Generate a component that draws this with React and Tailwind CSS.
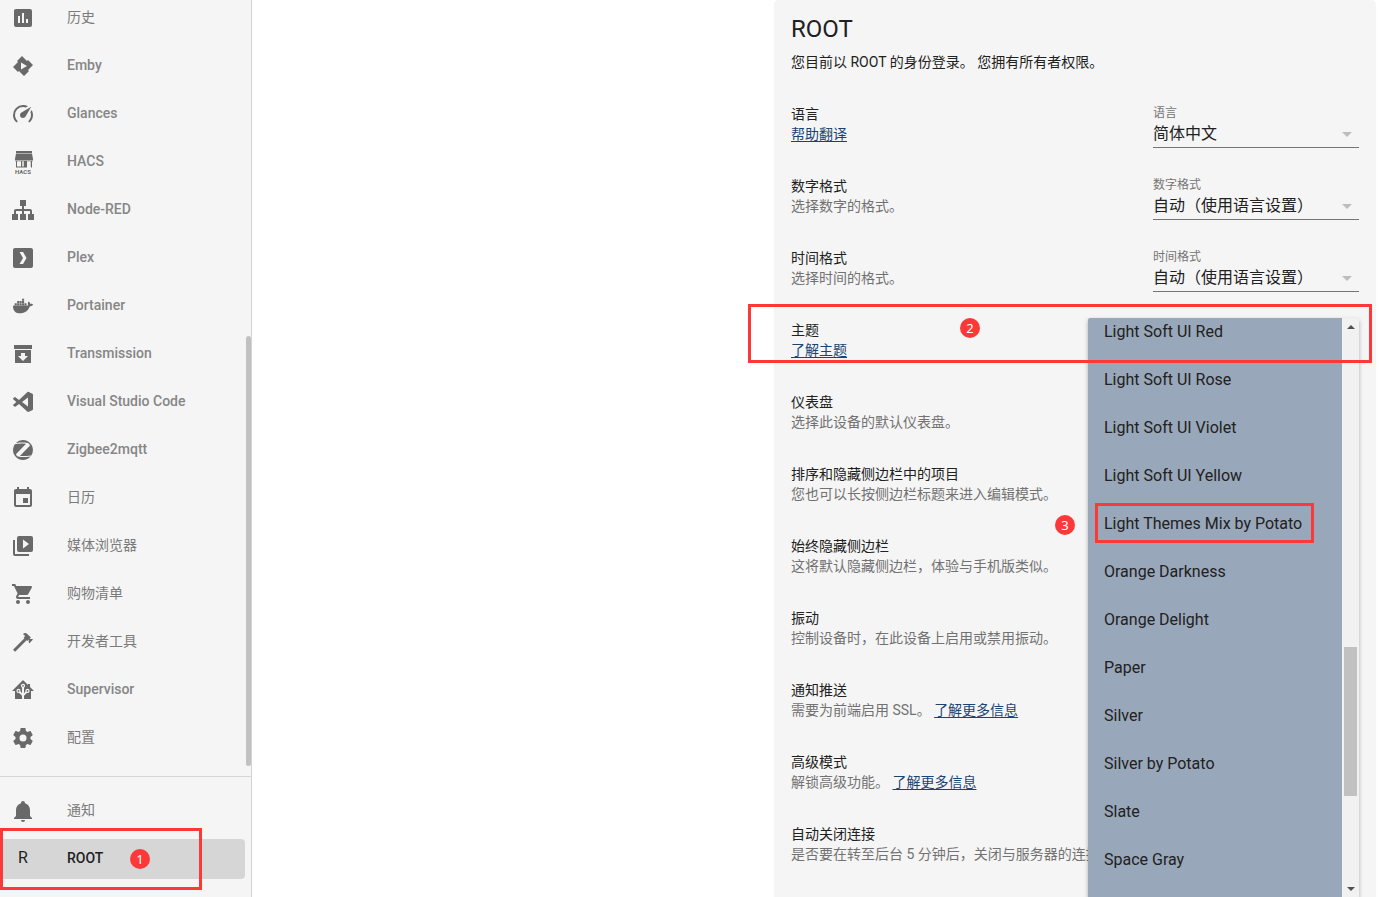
import React from "react";
import { SiZigbee } from "react-icons/si";

const PATHS = {
  history:
    "M9 17H7V10H9V17M13 17H11V7H13V17M17 17H15V13H17V17M19 3H5C3.89 3 3 3.89 3 5V19A2 2 0 0 0 5 21H19A2 2 0 0 0 21 19V5A2 2 0 0 0 19 3Z",
  emby: "M11,2L6,7L7,8L2,13L7,18L8,17L13,22L18,17L17,16L22,11L17,6L16,7L11,2M10,8.5L16,12L10,15.5V8.5Z",
  speedometer:
    "M12,16A3,3 0 0,1 9,13C9,11.88 9.61,10.9 10.5,10.39L20.21,4.77L14.68,14.35C14.18,15.33 13.17,16 12,16M12,3C13.81,3 15.5,3.5 16.97,4.32L14.87,5.53C14,5.19 13,5 12,5A8,8 0 0,0 4,13C4,15.21 4.89,17.21 6.34,18.65H6.35C6.74,19.04 6.74,19.67 6.35,20.06C5.96,20.45 5.32,20.45 4.93,20.07V20.07C3.12,18.26 2,15.76 2,13A10,10 0 0,1 12,3M22,13C22,15.76 20.88,18.26 19.07,20.07V20.07C18.68,20.45 18.05,20.45 17.66,20.06C17.27,19.67 17.27,19.04 17.66,18.65V18.65C19.11,17.2 20,15.21 20,13C20,12 19.81,11 19.46,10.1L20.67,8C21.5,9.5 22,11.18 22,13Z",
  sitemap:
    "M9,2V8H11V11H5C3.89,11 3,11.89 3,13V16H1V22H7V16H5V13H11V16H9V22H15V16H13V13H19V16H17V22H23V16H21V13C21,11.89 20.11,11 19,11H13V8H15V2H9Z",
  plex: "M4,2C2.89,2 2,2.89 2,4V20C2,21.11 2.89,22 4,22H20C21.11,22 22,21.11 22,20V4C22,2.89 21.11,2 20,2H4M8.56,6H12.06L15.5,12L12.06,18H8.56L12,12L8.56,6Z",
  docker:
    "M21.81 10.25C21.75 10.21 21.25 9.82 20.17 9.82C19.89 9.82 19.61 9.85 19.33 9.9C19.12 8.5 17.95 7.79 17.9 7.76L17.61 7.59L17.43 7.86C17.19 8.22 17 8.63 16.92 9.05C16.72 9.85 16.84 10.61 17.25 11.26C16.76 11.54 15.96 11.61 15.79 11.61H2.62C2.28 11.61 2 11.89 2 12.24C2 13.39 2.18 14.54 2.58 15.62C3.03 16.81 3.71 17.69 4.58 18.23C5.56 18.83 7.17 19.17 9 19.17C9.79 19.17 10.61 19.1 11.42 18.95C12.54 18.75 13.62 18.36 14.61 17.79C15.43 17.32 16.16 16.72 16.78 16C17.82 14.83 18.43 13.5 18.89 12.35H19.08C20.23 12.35 20.94 11.89 21.33 11.5C21.59 11.26 21.78 10.97 21.92 10.63L22 10.39L21.81 10.25M3.7 9.35H5.77V11.24H3.7ZM6.13 9.35H8.2V11.24H6.13ZM8.6 9.35H10.67V11.24H8.6ZM11.05 9.35H13.12V11.24H11.05ZM13.5 9.35H15.57V11.24H13.5ZM6.13 7.08H8.2V8.97H6.13ZM8.6 7.08H10.67V8.97H8.6ZM11.05 7.08H13.12V8.97H11.05ZM11.05 4.82H13.12V6.7H11.05Z",
  archive: "M3 3H21V7H3V3M4 8H20V21H4V8M14 14V11H10V14H7L12 19L17 14H14Z",
  vscode:
    "M17 16.47V7.39L11 11.93M2.22 9.19A.858.858 0 0 1 2.2 8.24L3.57 7.27S3.94 6.89 4.34 7.22L8 10L16.21 2.3C16.5 2 17.13 1.6 17.84 2L21.4 3.71A1 1 0 0 1 22 4.63V19.24C22 19.66 21.65 20.07 21.19 20.3L17.9 21.87S16.86 22.27 16.19 21.6L8 13.89L4.35 16.66S3.94 17 3.56 16.6L2.19 15.59A.87.87 0 0 1 2.21 14.65L5.35 11.94Z",
  calendar:
    "M19,19H5V8H19M16,1V3H8V1H6V3H5C3.89,3 3,3.89 3,5V19A2,2 0 0,0 5,21H19A2,2 0 0,0 21,19V5C21,3.89 20.1,3 19,3H18V1M17,12H12V17H17V12Z",
  media:
    "M4,6H2V20A2,2 0 0,0 4,22H18V20H4V6M20,2H8A2,2 0 0,0 6,4V16A2,2 0 0,0 8,18H20A2,2 0 0,0 22,16V4A2,2 0 0,0 20,2M12,14.5V5.5L18,10L12,14.5Z",
  cart: "M17,18A2,2 0 0,1 19,20A2,2 0 0,1 17,22C15.89,22 15,21.1 15,20C15,18.89 15.89,18 17,18M1,2H4.27L5.21,4H20A1,1 0 0,1 21,5C21,5.17 20.95,5.34 20.88,5.5L17.3,11.97C16.96,12.58 16.3,13 15.55,13H8.1L7.2,14.63L7.17,14.75A0.25,0.25 0 0,0 7.42,15H19V17H7C5.89,17 5,16.1 5,15C5,14.65 5.09,14.32 5.24,14.04L6.6,11.59L3,4H1V2M7,18A2,2 0 0,1 9,20A2,2 0 0,1 7,22C5.89,22 5,21.1 5,20C5,18.89 5.89,18 7,18Z",
  hammer:
    "M2,19.63L13.43,8.2L12.72,7.5L14.14,6.07L12,3.89C13.2,2.7 15.09,2.7 16.27,3.89L19.87,7.5L18.45,8.91H21.29L22,9.62L18.45,13.21L17.74,12.5V9.62L16.27,11.04L15.56,10.33L4.13,21.76L2,19.63Z",
  home: "M21.8,13H20V21H13V17.67L15.79,14.88L16.5,15C17.66,15 18.6,14.06 18.6,12.9C18.6,11.74 17.66,10.8 16.5,10.8A2.1,2.1 0 0,0 14.4,12.9L14.5,13.61L13,15.13V9.65C13.66,9.29 14.1,8.6 14.1,7.8A2.1,2.1 0 0,0 12,5.7A2.1,2.1 0 0,0 9.9,7.8C9.9,8.6 10.34,9.29 11,9.65V15.13L9.5,13.61L9.6,12.9A2.1,2.1 0 0,0 7.5,10.8A2.1,2.1 0 0,0 5.4,12.9A2.1,2.1 0 0,0 7.5,15L8.21,14.88L11,17.67V21H4V13H2.25C1.83,13 1.42,13 1.42,12.79C1.43,12.57 1.85,12.15 2.28,11.72L11,3C11.33,2.67 11.67,2.33 12,2.33C12.33,2.33 12.67,2.67 13,3L17,7V6H19V9L21.78,11.78C22.18,12.18 22.59,12.59 22.6,12.8C22.6,13 22.2,13 21.8,13M7.5,12A0.9,0.9 0 0,1 8.4,12.9A0.9,0.9 0 0,1 7.5,13.8A0.9,0.9 0 0,1 6.6,12.9A0.9,0.9 0 0,1 7.5,12M16.5,12C17,12 17.4,12.4 17.4,12.9C17.4,13.4 17,13.8 16.5,13.8A0.9,0.9 0 0,1 15.6,12.9A0.9,0.9 0 0,1 16.5,12M12,6.9C12.5,6.9 12.9,7.3 12.9,7.8C12.9,8.3 12.5,8.7 12,8.7C11.5,8.7 11.1,8.3 11.1,7.8C11.1,7.3 11.5,6.9 12,6.9Z",
  cog: "M12,15.5A3.5,3.5 0 0,1 8.5,12A3.5,3.5 0 0,1 12,8.5A3.5,3.5 0 0,1 15.5,12A3.5,3.5 0 0,1 12,15.5M19.43,12.97C19.47,12.65 19.5,12.33 19.5,12C19.5,11.67 19.47,11.34 19.43,11L21.54,9.37C21.73,9.22 21.78,8.95 21.66,8.73L19.66,5.27C19.54,5.05 19.27,4.96 19.05,5.05L16.56,6.05C16.04,5.66 15.5,5.32 14.87,5.07L14.5,2.42C14.46,2.18 14.25,2 14,2H10C9.75,2 9.54,2.18 9.5,2.42L9.13,5.07C8.5,5.32 7.96,5.66 7.44,6.05L4.95,5.05C4.73,4.96 4.46,5.05 4.34,5.27L2.34,8.73C2.21,8.95 2.27,9.22 2.46,9.37L4.57,11C4.53,11.34 4.5,11.67 4.5,12C4.5,12.33 4.53,12.65 4.57,12.97L2.46,14.63C2.27,14.78 2.21,15.05 2.34,15.27L4.34,18.73C4.46,18.95 4.73,19.03 4.95,18.95L7.44,17.94C7.96,18.34 8.5,18.68 9.13,18.93L9.5,21.58C9.54,21.82 9.75,22 10,22H14C14.25,22 14.46,21.82 14.5,21.58L14.87,18.93C15.5,18.67 16.04,18.34 16.56,17.94L19.05,18.95C19.27,19.03 19.54,18.95 19.66,18.73L21.66,15.27C21.78,15.05 21.73,14.78 21.54,14.63L19.43,12.97Z",
  bell: "M21,19V20H3V19L5,17V11C5,7.9 7.03,5.17 10,4.29C10,4.19 10,4.1 10,4A2,2 0 0,1 12,2A2,2 0 0,1 14,4C14,4.1 14,4.19 14,4.29C16.97,5.17 19,7.9 19,11V17L21,19M14,21A2,2 0 0,1 12,23A2,2 0 0,1 10,21",
};

function HacsIcon() {
  return (
    <svg viewBox="0 0 24 24" className="size-6 shrink-0 fill-current" aria-hidden="true">
      <rect x="5" y="1" width="16" height="2" />
      <path d="M5 3.4H21L22 9V10H4V9Z" />
      <path d="M4 10H22V11.5H4Z" opacity="0.5" />
      <path d="M5 11H6V17H5ZM5 16.5H16V17.5H5ZM10 11H11V17H10ZM13 11H16V17H13ZM20 11H21V17.5H20Z" />
      <path d="M11 11H13V17H11ZM19 11H20V17H19Z" opacity="0.25" />
      <text x="4" y="23.5" fontSize="6" fontWeight="700" fontFamily="Roboto, sans-serif">
        HACS
      </text>
    </svg>
  );
}

function Icon({ name }) {
  if (name === "hacs") return <HacsIcon />;
  if (name === "zigbee")
    return (
      <span className="flex size-6 shrink-0 items-center justify-center">
        <SiZigbee className="size-5" aria-hidden="true" />
      </span>
    );
  return (
    <svg viewBox="0 0 24 24" className="size-6 shrink-0 fill-current" aria-hidden="true">
      <path d={PATHS[name]} />
    </svg>
  );
}

const NAV = [
  ["history", "历史", true],
  ["emby", "Emby"],
  ["speedometer", "Glances"],
  ["hacs", "HACS"],
  ["sitemap", "Node-RED"],
  ["plex", "Plex"],
  ["docker", "Portainer"],
  ["archive", "Transmission"],
  ["vscode", "Visual Studio Code"],
  ["zigbee", "Zigbee2mqtt"],
  ["calendar", "日历", true],
  ["media", "媒体浏览器", true],
  ["cart", "购物清单", true],
  ["hammer", "开发者工具", true],
  ["home", "Supervisor"],
  ["cog", "配置", true],
];

function NavItem({ icon, label, cjk }) {
  return (
    <a href="#" className="flex h-10 items-center gap-8 pl-[11px] text-[#696969]">
      <Icon name={icon} />
      <span className={cjk ? "pb-0.5 text-[#7b7b7b]" : "pb-0.5 font-medium text-[#868686]"}>{label}</span>
    </a>
  );
}

function Badge({ children, className }) {
  return (
    <span
      className={`absolute flex size-5 items-center justify-center rounded-full bg-[#fd3838] font-['Noto_Sans',sans-serif] text-[13px] leading-5 text-white ${className}`}
    >
      {children}
    </span>
  );
}

function Sidebar() {
  return (
    <aside className="relative flex w-[252px] shrink-0 flex-col border-r border-[#d3d3d3] bg-[#f5f5f5] text-sm">
      <nav className="-mt-0.5 flex flex-col gap-2 pb-[18px]">
        {NAV.map(([icon, label, cjk]) => (
          <NavItem key={label} icon={icon} label={label} cjk={cjk} />
        ))}
      </nav>
      <div className="absolute top-[336px] right-0 h-[430px] w-[5px] rounded-sm bg-[#c1c1c1]" />
      <div className="relative flex flex-col gap-2 border-t border-[#d6d6d6] pt-3.5">
        <NavItem icon="bell" label="通知" cjk />
        <a
          href="#"
          className="mr-1.5 flex h-10 items-center gap-8 rounded-sm bg-[#d6d6d6] pl-[11px] text-[#212121]"
        >
          <span className="w-6 pb-0.5 text-center text-base">R</span>
          <span className="pb-0.5 font-medium">ROOT</span>
        </a>
        <div className="pointer-events-none absolute top-[51px] left-0 h-[62px] w-[202px] border-3 border-[#fd3838]" />
        <Badge className="top-[72px] left-[130px]">1</Badge>
      </div>
    </aside>
  );
}

function Link({ children }) {
  return (
    <a href="#" className="text-[#1c4473] underline underline-offset-2">
      {children}
    </a>
  );
}

const SETTINGS = [
  { title: "语言", desc: <Link>帮助翻译</Link>, select: "简体中文" },
  { title: "数字格式", desc: "选择数字的格式。", select: "自动（使用语言设置）" },
  { title: "时间格式", desc: "选择时间的格式。", select: "自动（使用语言设置）" },
  { title: "主题", desc: <Link>了解主题</Link> },
  { title: "仪表盘", desc: "选择此设备的默认仪表盘。" },
  { title: "排序和隐藏侧边栏中的项目", desc: "您也可以长按侧边栏标题来进入编辑模式。" },
  { title: "始终隐藏侧边栏", desc: "这将默认隐藏侧边栏，体验与手机版类似。" },
  { title: "振动", desc: "控制设备时，在此设备上启用或禁用振动。" },
  { title: "通知推送", desc: <>需要为前端启用 SSL。 <Link>了解更多信息</Link></> },
  { title: "高级模式", desc: <>解锁高级功能。 <Link>了解更多信息</Link></> },
  { title: "自动关闭连接", desc: "是否要在转至后台 5 分钟后，关闭与服务器的连接。" },
];

function SelectField({ id, label, value }) {
  return (
    <div className="relative mt-1 flex h-11 w-[206px] flex-col border-b border-[#757575]">
      <label htmlFor={id} className="text-xs leading-[18px] text-[#757575]">
        {label}
      </label>
      <select
        id={id}
        className="h-6 w-full appearance-none bg-transparent text-base leading-6 text-[#212121] outline-none"
      >
        <option>{value}</option>
      </select>
      <svg
        viewBox="0 0 10 5"
        className="pointer-events-none absolute right-[7px] bottom-2.5 h-[5px] w-2.5 fill-[#bdbdbd]"
        aria-hidden="true"
      >
        <path d="M0 0H10L5 5Z" />
      </svg>
    </div>
  );
}

function SettingRow({ index, title, desc, select }) {
  return (
    <div className="flex h-[72px] items-center justify-between whitespace-nowrap">
      <div className="text-sm leading-5">
        <div className="text-[#212121]">{title}</div>
        <div className="text-[#727272]">{desc}</div>
      </div>
      {select && <SelectField id={`setting-${index}`} label={title} value={select} />}
    </div>
  );
}

const THEMES = [
  "Light Soft UI Red",
  "Light Soft UI Rose",
  "Light Soft UI Violet",
  "Light Soft UI Yellow",
  "Light Themes Mix by Potato",
  "Orange Darkness",
  "Orange Delight",
  "Paper",
  "Silver",
  "Silver by Potato",
  "Slate",
  "Space Gray",
];

function ThemeMenu() {
  return (
    <div className="absolute top-[318px] right-[41px] bottom-0 flex w-[271px] rounded-t-xs shadow-[0_2px_4px_rgba(0,0,0,0.3)]">
      <div className="flex-1 overflow-hidden rounded-tl-xs bg-[#99a7ba]">
        <ul role="listbox" aria-label="主题" className="-mt-2.5">
          {THEMES.map((t) => (
            <li key={t} role="option" aria-selected="false">
              <button type="button" className="flex h-12 w-full items-center px-4 text-left text-base text-[#212121]">
                {t}
              </button>
            </li>
          ))}
        </ul>
      </div>
      <div className="relative flex w-[17px] flex-col items-center justify-between bg-[#f1f1f1] pt-[7px] pb-1.5">
        <svg viewBox="0 0 8 4" className="h-1 w-2 fill-[#505050]" aria-hidden="true">
          <path d="M0 4L4 0L8 4Z" />
        </svg>
        <div className="absolute top-[329px] h-[149px] w-[13px] bg-[#c1c1c1]" />
        <svg viewBox="0 0 8 4" className="h-1 w-2 fill-[#505050]" aria-hidden="true">
          <path d="M0 0L4 4L8 0Z" />
        </svg>
      </div>
      <div className="pointer-events-none absolute top-[185px] left-[7px] h-10 w-[219px] border-3 border-[#fd3838]" />
      <Badge className="top-[197px] -left-[33px]">3</Badge>
    </div>
  );
}

export default function App() {
  return (
    <div className="flex h-screen overflow-hidden bg-white font-['Roboto','Noto_Sans_CJK_SC',sans-serif]">
      <Sidebar />
      <main className="relative flex flex-1 justify-end pt-px pr-[25px]">
        <section className="h-max w-full max-w-[600px] rounded-sm bg-[#f5f5f5] px-4 pt-3 pb-8 shadow-[0_0_2px_rgba(0,0,0,0.15)]">
          <h1 className="text-2xl leading-8 text-[#212121]">ROOT</h1>
          <p className="mt-[7px] mb-4 text-sm leading-5 text-[#212121]">
            您目前以 ROOT 的身份登录。 您拥有所有者权限。
          </p>
          {SETTINGS.map((s, i) => (
            <SettingRow key={s.title} index={i} {...s} />
          ))}
        </section>
        <ThemeMenu />
        <div className="pointer-events-none absolute top-[304px] right-7 h-[59px] w-[624px] border-3 border-[#fd3838]" />
        <Badge className="top-[318px] right-[420px]">2</Badge>
      </main>
    </div>
  );
}
